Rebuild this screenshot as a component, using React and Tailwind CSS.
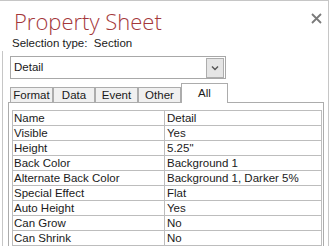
const ROWS = [
  ['Name', 'Detail'],
  ['Visible', 'Yes'],
  ['Height', '5.25"'],
  ['Back Color', 'Background 1'],
  ['Alternate Back Color', 'Background 1, Darker 5%'],
  ['Special Effect', 'Flat'],
  ['Auto Height', 'Yes'],
  ['Can Grow', 'No'],
  ['Can Shrink', 'No'],
]

const TABS = [
  { label: 'Format', w: 'w-[43px]' },
  { label: 'Data', w: 'w-[42px]' },
  { label: 'Event', w: 'w-[43px]' },
  { label: 'Other', w: 'w-[43px]' },
]

export default function App() {
  return (
    <div className="w-[329px] h-[246px] overflow-hidden bg-white border-t border-r border-[#c6c6c6] text-[#1a1a1a] font-['Liberation_Sans',Arial,sans-serif]">
      {/* Header */}
      <div className="flex items-start justify-between">
        <h1 className="mt-[6px] ml-[14px] h-[28px] leading-[28px] text-[22px] font-light text-[#a4373a] font-['Open_Sans','Noto_Sans',sans-serif]">
          Property Sheet
        </h1>
        <button className="mt-[12px] mr-[6px] w-[11px] h-[11px] flex items-center justify-center">
          <svg width="11" height="11" viewBox="0 0 11 11">
            <path d="M1 1L10 10M10 1L1 10" stroke="#7a7a7a" strokeWidth="1.8" />
          </svg>
        </button>
      </div>
      <div className="ml-[12px] h-[16px] leading-[16px] text-[11.5px]">
        Selection type:&nbsp;&nbsp;Section
      </div>

      {/* Body */}
      <div className="ml-[2px] h-[200px] border-l border-[#c6c6c6] pt-[5px]">
        {/* Dropdown */}
        <div className="ml-[7px] w-[216px] h-[23px] border border-[#a8a8a8] flex items-center justify-between">
          <span className="ml-[3px] text-[11.5px]">Detail</span>
          <div className="mr-[1px] w-[18px] h-[20px] border border-[#adadad] bg-[#e5e5e5] flex items-center justify-center">
            <svg width="8" height="6" viewBox="0 0 8 6">
              <path d="M1 1.5L4 4.5L7 1.5" fill="none" stroke="#555" strokeWidth="1.4" />
            </svg>
          </div>
        </div>

        {/* Tabs */}
        <div className="mt-[4px] ml-[7px] flex items-end h-[20px] relative z-10 -mb-px">
          {TABS.map((t) => (
            <div
              key={t.label}
              className={`${t.w} h-[16px] border border-[#acacac] bg-[#f0f0f0] text-[11.5px] leading-[14px] text-center`}
            >
              {t.label}
            </div>
          ))}
          <div className="w-[47px] h-[20px] border border-b-0 border-[#acacac] bg-white text-[11.5px] leading-[18px] text-center">
            All
          </div>
        </div>

        {/* Panel */}
        <div className="ml-[5px] w-[316px] h-[160px] border border-b-0 border-[#acacac] pt-[7px] pl-[3px]">
          <div className="w-[310px] border border-b-0 border-[#bdbdbd] text-[11.5px]">
            {ROWS.map(([k, v]) => (
              <div key={k} className="flex h-[15px] border-b border-[#bdbdbd] leading-[14px]">
                <div className="w-[152px] border-r border-[#bdbdbd] pl-[1px] whitespace-nowrap">{k}</div>
                <div className="pl-[2px] whitespace-nowrap">{v}</div>
              </div>
            ))}
          </div>
        </div>
      </div>
    </div>
  )
}
